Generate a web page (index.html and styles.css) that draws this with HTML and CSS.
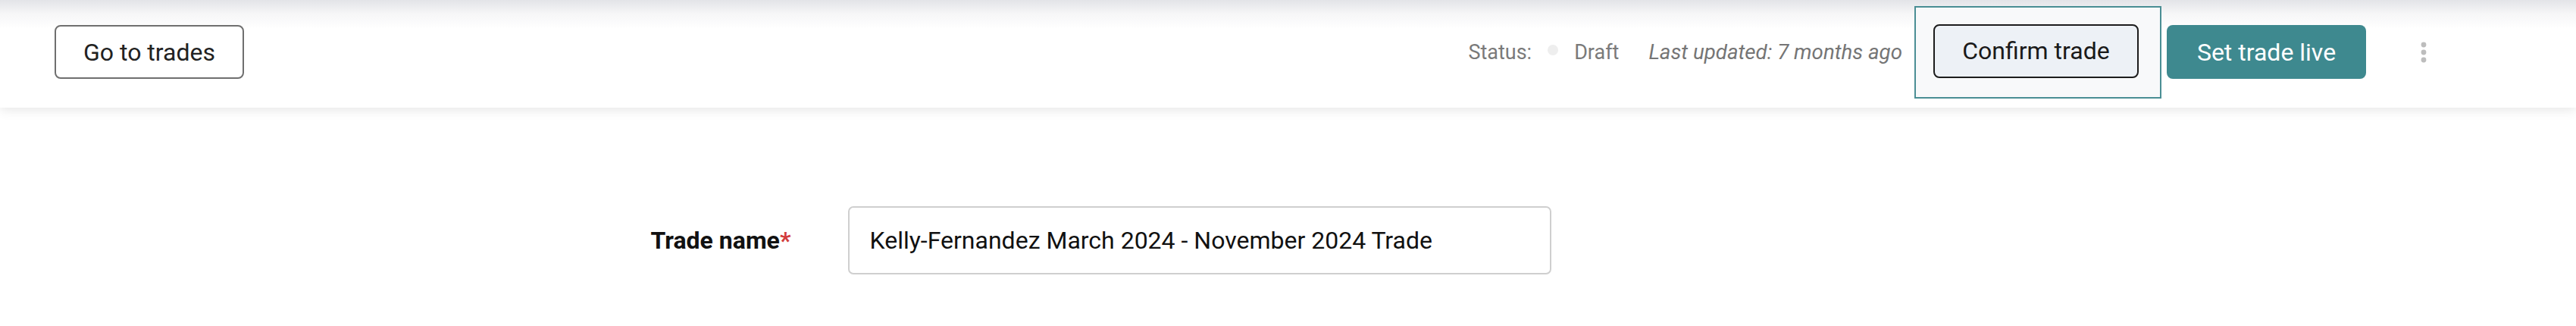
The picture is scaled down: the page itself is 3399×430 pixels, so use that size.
FILE: index.html
```html
<!DOCTYPE html>
<html>
<head>
  <meta charset="UTF-8">
  <title>Trade</title>
  <link rel="stylesheet" href="styles.css">
</head>
<body>
  <header class="topbar">
    <button class="back-button">Go to trades</button>

    <div class="topbar-right">
      <span class="status-label">Status:</span>
      <span class="status-dot"></span>
      <span class="status-value">Draft</span>
      <span class="last-updated">Last updated: 7 months ago</span>

      <div class="focus-ring">
        <button class="confirm-button">Confirm trade</button>
      </div>
      <button class="live-button">Set trade live</button>

      <button class="menu-button" aria-label="More">
        <svg width="10" height="30" viewBox="0 0 10 30">
          <circle cx="5" cy="5" r="3.4" fill="#bdbdbd"/>
          <circle cx="5" cy="15" r="3.4" fill="#bdbdbd"/>
          <circle cx="5" cy="25" r="3.4" fill="#bdbdbd"/>
        </svg>
      </button>
    </div>
  </header>

  <main class="container">
    <div class="form-row">
      <label class="form-label" for="tradeName">Trade name<span class="required">*</span></label>
      <input class="text-input" id="tradeName" type="text" value="Kelly-Fernandez March 2024 - November 2024 Trade">
    </div>
  </main>
</body>
</html>
```

FILE: styles.css
```css
body {
  font-family: Roboto, "Liberation Sans", sans-serif;
  margin: 0;
  padding: 0;
  background-color: #fff;
  color: #1a1a1a;
  overflow: hidden;
}

button {
  font-family: inherit;
  cursor: pointer;
}

/* barra superior */
.topbar {
  box-sizing: border-box;
  height: 142px;
  padding: 0 181px 5px 72px;
  display: flex;
  justify-content: space-between;
  align-items: center;
  background: linear-gradient(to bottom, #e3e4e8 0px, #f6f6f7 18px, #fff 38px);
  box-shadow: 0 3px 14px rgba(0, 0, 0, 0.10);
  position: relative;
}

.back-button {
  box-sizing: border-box;
  width: 250px;
  height: 71px;
  background-color: #fff;
  border: 2px solid #6f6f6f;
  border-radius: 8px;
  font-size: 32px;
  color: #222;
}

.topbar-right {
  display: flex;
  align-items: center;
}

.status-label,
.status-value {
  font-size: 27px;
  color: #7a7a7a;
}

.status-dot {
  width: 14px;
  height: 14px;
  border-radius: 50%;
  background-color: #eeeeee;
  margin: 0 21px;
  position: relative;
  top: -3px;
}

.last-updated {
  font-size: 27.7px;
  font-style: italic;
  color: #757575;
  margin-left: 39px;
}

.focus-ring {
  margin-left: 16px;
  padding: 22px 28px 25px 23px;
  border: 2px solid #4a8e94;
  background-color: #f8f9fa;
}

.confirm-button {
  box-sizing: border-box;
  width: 271px;
  height: 71px;
  background-color: #edf1f6;
  border: 2px solid #1c1c1c;
  border-radius: 8px;
  font-size: 32px;
  color: #1a1a1a;
  display: block;
}

.live-button {
  box-sizing: border-box;
  width: 263px;
  height: 71px;
  margin-left: 7px;
  background-color: #3e898f;
  border: none;
  border-radius: 8px;
  font-size: 32px;
  color: #fff;
}

.menu-button {
  background: none;
  border: none;
  padding: 0 15px;
  margin-left: 56px;
  display: flex;
  align-items: center;
}

/* formulario */
.container {
  width: 1682px;
  margin: 130px auto 0;
}

.form-row {
  display: flex;
  align-items: center;
}

.form-label {
  width: 260px;
  font-size: 32px;
  font-weight: bold;
  color: #111;
}

.required {
  color: #d23c3c;
}

.text-input {
  box-sizing: border-box;
  width: 928px;
  height: 90px;
  padding: 0 27px;
  border: 2px solid #cfcfcf;
  border-radius: 7px;
  font-family: inherit;
  font-size: 32px;
  color: #111;
  background-color: #fff;
}
```
